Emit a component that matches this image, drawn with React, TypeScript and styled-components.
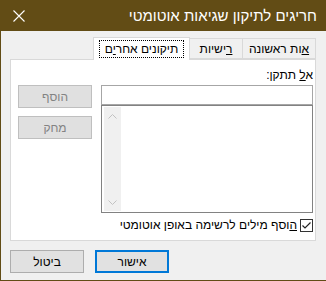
import React, { FC } from 'react';
import styled, { createGlobalStyle } from 'styled-components';

const brown = '#624c15';

const GlobalStyle = createGlobalStyle`
  html, body {
    margin: 0;
    padding: 0;
    background: #f0f0f0;
  }
`;

const Window = styled.div`
  width: 326px;
  height: 281px;
  box-sizing: border-box;
  border-left: 1px solid ${brown};
  border-bottom: 1px solid ${brown};
  background: #f0f0f0;
  direction: rtl;
  font-family: "Liberation Sans", "DejaVu Sans", sans-serif;
  font-size: 12px;
  color: #000;
  display: flex;
  flex-direction: column;
  overflow: hidden;
`;

const TitleBar = styled.div`
  height: 31px;
  flex: none;
  background: ${brown};
  display: flex;
  align-items: center;
  justify-content: space-between;
  padding: 0 9px 0 11px;
`;

const Title = styled.div`
  color: #fff;
  font-size: 15px;
  white-space: nowrap;
`;

const CloseBox = styled.div`
  width: 14px;
  height: 14px;
  display: flex;
  align-items: center;
  justify-content: center;
`;

const Body = styled.div`
  padding: 6px 10px 0 9px;
  display: flex;
  flex-direction: column;
`;

const TabRow = styled.div`
  height: 22px;
  display: flex;
  align-items: flex-end;
`;

const Tab = styled.div<{ $w: number; $active?: boolean }>`
  width: ${(p) => p.$w}px;
  height: ${(p) => (p.$active ? 23 : 21)}px;
  box-sizing: border-box;
  border: 1px solid #d9d9d9;
  border-bottom: ${(p) => (p.$active ? 'none' : '1px solid #d9d9d9')};
  margin-left: -1px;
  margin-bottom: ${(p) => (p.$active ? -1 : 0)}px;
  background: ${(p) => (p.$active ? '#fff' : '#f0f0f0')};
  position: relative;
  z-index: ${(p) => (p.$active ? 2 : 1)};
  display: flex;
  align-items: center;
  justify-content: center;
  white-space: nowrap;
`;

const Focus = styled.span`
  outline: 1px dotted #000;
  padding: 1px 5px 1px 5px;
`;

const Panel = styled.div`
  height: 182px;
  box-sizing: border-box;
  border: 1px solid #d9d9d9;
  background: #fff;
  padding: 8px 2px 0 7px;
  display: flex;
  flex-direction: column;
`;

const Columns = styled.div`
  display: flex;
  justify-content: space-between;
`;

const RightCol = styled.div`
  width: 212px;
  display: flex;
  flex-direction: column;
`;

const Label = styled.div`
  height: 17px;
  line-height: 14px;
`;

const Input = styled.div`
  height: 20px;
  box-sizing: border-box;
  border: 1px solid #a6a6a6;
  background: #fff;
`;

const List = styled.div`
  height: 108px;
  margin-top: 0;
  box-sizing: border-box;
  border: 1px solid #828282;
  background: #fff;
  display: flex;
  justify-content: flex-end;
  padding: 1px 2px 1px 2px;
`;

const ScrollTrack = styled.div`
  width: 17px;
  background: #f0f0f0;
  display: flex;
  flex-direction: column;
  justify-content: space-between;
  align-items: center;
  padding: 7px 0 6px;
`;

const LeftCol = styled.div`
  width: 74px;
  padding-top: 17px;
  display: flex;
  flex-direction: column;
  gap: 8px;
`;

const Button = styled.div<{ $disabled?: boolean; $default?: boolean }>`
  width: 74px;
  height: 23px;
  box-sizing: border-box;
  border: ${(p) => (p.$default ? '2px solid #0078d7' : p.$disabled ? '1px solid #bfbfbf' : '1px solid #adadad')};
  background: ${(p) => (p.$disabled ? '#e0e0e0' : '#e1e1e1')};
  color: ${(p) => (p.$disabled ? '#838383' : '#000')};
  display: flex;
  align-items: center;
  justify-content: center;
`;

const CheckRow = styled.label`
  display: flex;
  align-items: center;
  gap: 3px;
  margin-top: 5px;
  height: 14px;
`;

const CheckBox = styled.div`
  width: 13px;
  height: 13px;
  box-sizing: border-box;
  border: 1px solid #333;
  background: #fff;
  display: flex;
  align-items: center;
  justify-content: center;
`;

const Footer = styled.div`
  display: flex;
  justify-content: flex-end;
  gap: 11px;
  padding: 9px 0 0;
`;

const Chevron: FC<{ up?: boolean }> = ({ up }) => (
  <svg width="9" height="5" viewBox="0 0 9 5">
    <path
      d={up ? 'M0.5 4.5 L4.5 0.5 L8.5 4.5' : 'M0.5 0.5 L4.5 4.5 L8.5 0.5'}
      fill="none"
      stroke="#c2c2c2"
      strokeWidth="1"
    />
  </svg>
);

export default function App() {
  return (
    <>
      <GlobalStyle />
      <Window>
        <TitleBar>
          <Title>חריגים לתיקון שגיאות אוטומטי</Title>
          <CloseBox>
            <svg width="12" height="12" viewBox="0 0 12 12">
              <path d="M0.5 0.5 L11.5 11.5 M11.5 0.5 L0.5 11.5" stroke="#fff" strokeWidth="1.1" />
            </svg>
          </CloseBox>
        </TitleBar>
        <Body>
          <TabRow>
            <Tab $w={74}>
              <span><u>א</u>ות ראשונה</span>
            </Tab>
            <Tab $w={54}>
              <span><u>ר</u>ישיות</span>
            </Tab>
            <Tab $w={97} $active>
              <Focus>תיקונים אחר<u>י</u>ם</Focus>
            </Tab>
          </TabRow>
          <Panel>
            <Columns>
              <RightCol>
                <Label>א<u>ל</u> תתקן:</Label>
                <Input />
                <List>
                  <ScrollTrack>
                    <Chevron up />
                    <Chevron />
                  </ScrollTrack>
                </List>
              </RightCol>
              <LeftCol>
                <Button $disabled>הוסף</Button>
                <Button $disabled>מחק</Button>
              </LeftCol>
            </Columns>
            <CheckRow>
              <CheckBox>
                <svg width="11" height="11" viewBox="0 0 11 11">
                  <path d="M1.5 5.5 L4 8 L9.5 2.5" fill="none" stroke="#222" strokeWidth="1.2" />
                </svg>
              </CheckBox>
              <span><u>ה</u>וסף מילים לרשימה באופן אוטומטי</span>
            </CheckRow>
          </Panel>
          <Footer>
            <Button $default>אישור</Button>
            <Button>ביטול</Button>
          </Footer>
        </Body>
      </Window>
    </>
  );
}
